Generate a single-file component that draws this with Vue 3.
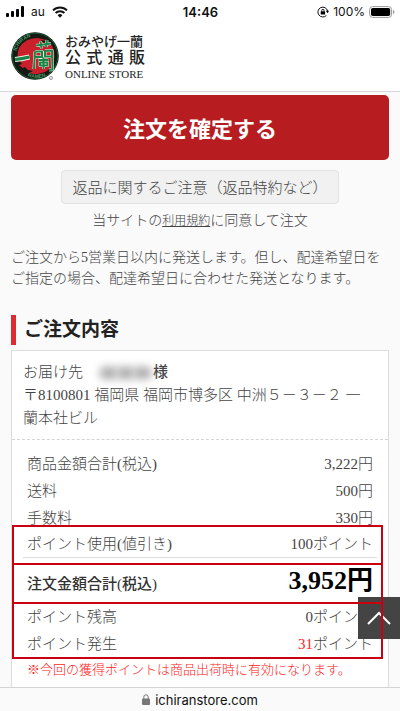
<template>
  <div class="screen">
    <!-- ステータスバー -->
    <div class="status-bar">
      <div class="status-side">
        <svg class="signal" viewBox="0 0 18 11" aria-hidden="true">
          <rect x="0" y="7" width="3" height="4" rx="1" />
          <rect x="5" y="5" width="3" height="6" rx="1" />
          <rect x="10" y="3" width="3" height="8" rx="1" />
          <rect x="15" y="0" width="3" height="11" rx="1" />
        </svg>
        <span>au</span>
        <svg class="wifi" viewBox="0 0 16 12" aria-hidden="true">
          <path d="M1 4.4a10 10 0 0 1 14 0" />
          <path d="M3.6 7a6.3 6.3 0 0 1 8.8 0" />
          <path class="wifi-dot" d="M8 11.8 5.6 9.3a3.4 3.4 0 0 1 4.8 0z" />
        </svg>
      </div>
      <strong class="clock">14:46</strong>
      <div class="status-side status-right">
        <svg class="rotation" viewBox="0 0 12 12" aria-hidden="true">
          <path class="ring" d="M10.6 5A4.9 4.9 0 1 0 9.4 9.4" />
          <path d="M8.8 4.8h3.2l-1.4 2.4z" />
          <rect x="3.7" y="5.2" width="4.4" height="3.4" rx=".5" />
          <path class="ring" d="M4.7 5.4V4.5a1.2 1.2 0 0 1 2.4 0v.9" />
        </svg>
        <span>100%</span>
        <svg class="battery" viewBox="0 0 26 12" aria-hidden="true">
          <rect class="battery-frame" x=".6" y=".6" width="22" height="10.8" rx="3" />
          <rect x="2" y="2" width="19.2" height="8" rx="1.8" />
          <path class="battery-tip" d="M24 4v4q1.5-.6 1.5-2T24 4z" />
        </svg>
      </div>
    </div>

    <!-- ヘッダー -->
    <header class="site-header">
      <a class="brand" href="#">
        <svg class="emblem" viewBox="0 0 50 50" aria-hidden="true">
          <defs>
            <path id="arc-top" d="M5.500 20A19.500 19.500 0 0 1 34 8" />
            <path id="arc-bottom" d="M14 43.500a22 22 0 0 0 25-1" />
          </defs>
          <circle cx="24" cy="25" r="23.800" fill="#141a14" />
          <circle cx="24" cy="25" r="22.800" fill="none" stroke="#1e6b3c" stroke-width=".8" />
          <path d="M8 17Q14 7 26 7q14 1 17 13 2 13-7 20-9 5-18 2l3-2-7-1-6-5 3-1Q4 26 8 17z" fill="#c9202b" />
          <path d="m9 38 5-2 3 3 5 1-4 2-6-1zM30 9l6 1-3 2z" fill="#141a14" />
          <text class="ring-text"><textPath href="#arc-top">ICHIRAN</textPath></text>
          <text class="ring-text"><textPath href="#arc-bottom" startOffset="3">RAMEN</textPath></text>
          <g class="mark-outline">
            <path class="mark-bar" d="M4 28.500Q10 28 18.500 26" />
            <path d="M25 14.500 40 12.500M29.500 10.500l1 7M36 9l-1 7" />
            <path d="M24 20.500 23 38M24 20.500h7v5.500h-7M34 20l7-.5.500 19-3.500.5M34 20v5.500h7M27.500 29h10M32.500 26.500V38M29 31.500h7.500v3H29z" />
          </g>
          <g class="mark">
            <path class="mark-bar" d="M4 28.500Q10 28 18.500 26" />
            <path d="M25 14.500 40 12.500M29.500 10.500l1 7M36 9l-1 7" />
            <path d="M24 20.500 23 38M24 20.500h7v5.500h-7M34 20l7-.5.500 19-3.500.5M34 20v5.500h7M27.500 29h10M32.500 26.500V38M29 31.500h7.500v3H29z" />
          </g>
          <circle cx="40" cy="47" r="1.500" fill="none" stroke="#666" stroke-width=".7" />
        </svg>
        <span class="brand-text">
          <span class="brand-sub">おみやげ一蘭</span>
          <span class="brand-main">公式通販</span>
          <span class="brand-en">ONLINE STORE</span>
        </span>
      </a>
    </header>

    <main class="content">
      <button class="btn-order" type="button">注文を確定する</button>
      <button class="btn-notice" type="button">返品に関するご注意（返品特約など）</button>
      <p class="agree">当サイトの<a href="#">利用規約</a>に同意して注文</p>
      <p class="shipping-note">
        ご注文から5営業日以内に発送します。但し、配達希望日を<br />ご指定の場合、配達希望日に合わせた発送となります。
      </p>

      <h2 class="section-title">ご注文内容</h2>

      <section class="order-card">
        <!-- お届け先 -->
        <div class="address">
          <div class="recipient">
            <span>お届け先</span>
            <span class="masked-name" aria-hidden="true"><i></i><i></i><i></i></span>
            <b>様</b>
          </div>
          <div>〒8100801 福岡県 福岡市博多区 中洲５－３－２ 一<br />蘭本社ビル</div>
        </div>

        <!-- 金額 -->
        <dl class="amounts">
          <div v-for="item in amounts" :key="item.label" class="row">
            <dt>{{ item.label }}</dt>
            <dd>{{ item.value }}</dd>
          </div>
        </dl>
        <dl class="frame frame-used">
          <div class="row">
            <dt>ポイント使用(値引き)</dt>
            <dd>100ポイント</dd>
          </div>
        </dl>
        <dl class="frame frame-total">
          <div class="row">
            <dt>注文金額合計(税込)</dt>
            <dd>3,952円</dd>
          </div>
        </dl>
        <dl class="frame frame-points">
          <div class="row">
            <dt>ポイント残高</dt>
            <dd>0ポイント</dd>
          </div>
          <div class="row">
            <dt>ポイント発生</dt>
            <dd><span class="earned">31</span>ポイント</dd>
          </div>
        </dl>
        <p class="point-note">※今回の獲得ポイントは商品出荷時に有効になります。</p>
      </section>
    </main>

    <!-- ページ上部へ -->
    <button class="to-top" type="button" aria-label="ページ上部へ" @click="scrollToTop">
      <svg viewBox="0 0 26 16" aria-hidden="true"><path d="M2 14 13 3l11 11" /></svg>
    </button>

    <!-- アドレスバー -->
    <footer class="address-bar">
      <svg viewBox="0 0 8 11" aria-hidden="true">
        <rect x="0" y="4.500" width="8" height="6.500" rx="1" />
        <path d="M1.800 5V3a2.200 2.200 0 0 1 4.400 0v2" />
      </svg>
      <span>ichiranstore.com</span>
    </footer>
  </div>
</template>

<script setup>
const amounts = [
  { label: '商品金額合計(税込)', value: '3,222円' },
  { label: '送料', value: '500円' },
  { label: '手数料', value: '330円' }
]

function scrollToTop() {
  document.querySelector('.content').scrollTo({ top: 0, behavior: 'smooth' })
}
</script>

<style>
body {
  margin: 0;
}
</style>

<style scoped>
.screen {
  position: relative;
  display: flex;
  flex-direction: column;
  height: 100vh;
  background: #fafafa;
  color: #444;
  font-family: "Liberation Serif", "Noto Sans CJK JP", serif;
  font-size: 15px;
  font-weight: 300;
}

p,
dl,
dd,
h2 {
  margin: 0;
}

button {
  font-family: inherit;
  cursor: pointer;
}

.status-bar {
  display: flex;
  align-items: center;
  flex-shrink: 0;
  height: 23px;
  padding: 0 5px 0 6px;
  background: #fff;
  color: #111;
  font-family: Inter, sans-serif;
  font-size: 12px;
  font-weight: 400;
}

.status-side {
  display: flex;
  flex: 1;
  align-items: center;
  gap: 7px;
}

.status-right {
  justify-content: flex-end;
  gap: 4px;
}

.clock {
  font-size: 13px;
  font-weight: 600;
}

.signal {
  width: 18px;
  height: 11px;
}

.wifi {
  width: 16px;
  height: 12px;
  fill: none;
  stroke: #111;
  stroke-width: 2;
}

.wifi-dot {
  fill: #111;
  stroke: none;
}

.rotation {
  width: 12px;
  height: 12px;
}

.ring {
  fill: none;
  stroke: #111;
  stroke-width: 1;
}

.battery {
  width: 26px;
  height: 12px;
}

.battery-frame {
  fill: none;
  stroke: #999;
}

.battery-tip {
  fill: #999;
}

.site-header {
  flex-shrink: 0;
  padding: 7px 11px 9px;
  border-bottom: 1px solid #d8d8da;
  background: #fff;
}

.brand {
  display: flex;
  align-items: center;
  gap: 4px;
  color: #222;
  text-decoration: none;
}

.emblem {
  width: 50px;
  height: 50px;
}

.ring-text {
  fill: #4c9a68;
  font-family: "Liberation Sans", sans-serif;
  font-size: 5px;
  font-weight: 700;
}

.mark-outline,
.mark {
  fill: none;
  stroke: #f3f0e4;
  stroke-width: 3;
  stroke-linejoin: round;
}

.mark {
  stroke: #168548;
  stroke-width: 2;
}

.mark-outline .mark-bar {
  stroke-width: 5;
}

.mark .mark-bar {
  stroke-width: 3;
}

.brand-text {
  display: flex;
  flex-direction: column;
  width: 80px;
  padding-top: 4px;
  font-weight: 500;
  line-height: 16px;
}

.brand-sub {
  font-size: 13px;
}

.brand-main {
  font-size: 16px;
  text-align: justify;
  text-align-last: justify;
}

.brand-en {
  font-size: 11px;
  white-space: nowrap;
}

.content {
  display: flex;
  flex: 1;
  flex-direction: column;
  min-height: 0;
  padding: 3px 11px 0;
  overflow: hidden;
}

.btn-order {
  flex-shrink: 0;
  height: 65px;
  padding: 0 0 2px;
  border: none;
  border-radius: 5px;
  background: #b71c21;
  color: #fff;
  font-size: 22px;
  font-weight: 700;
}

.btn-notice {
  flex-shrink: 0;
  align-self: center;
  height: 34px;
  margin-top: 10px;
  padding: 0 10px 2px;
  border: 1px solid #e2e2e2;
  border-radius: 4px;
  background: #f1f1f1;
  color: #444;
  font-size: 15px;
  font-weight: 300;
}

.agree {
  margin-top: 7px;
  font-size: 14px;
  line-height: 20px;
  text-align: center;
}

.agree a {
  color: #444;
  font-size: 12px;
}

.shipping-note {
  margin-top: 16px;
  font-size: 14px;
  line-height: 21px;
  white-space: nowrap;
}

.section-title {
  margin-top: 26px;
  padding-left: 8px;
  border-left: 5px solid #dc2e32;
  color: #222;
  font-size: 19px;
  font-weight: 700;
  line-height: 30px;
}

.order-card {
  flex: 1 0 auto;
  margin-top: 5px;
  border: 1px solid #dcdcdc;
  border-bottom: none;
  background: #fff;
}

.address {
  padding: 10px 11px 9px;
  border-bottom: 1px dashed #d4d4d4;
  line-height: 23px;
}

.recipient {
  display: flex;
}

.masked-name {
  display: flex;
  align-items: center;
  justify-content: center;
  width: 56px;
  margin-left: 14px;
}

.masked-name i {
  width: 17px;
  height: 12px;
  border-radius: 4px;
  background: #aaa;
  filter: blur(4px);
}

.recipient b {
  color: #444;
  font-weight: 500;
}

.row {
  display: flex;
  align-items: center;
  justify-content: space-between;
  padding: 0 15px;
  line-height: 27px;
}

.amounts {
  padding-top: 11px;
}

.frame {
  position: relative;
  margin-right: 5px;
}

.frame .row {
  padding-right: 10px;
}

/* 赤枠はボタンよりも手前に出す */
.frame::after {
  position: absolute;
  z-index: 3;
  inset: -2px 0 0;
  border: 2px solid #c8000f;
  content: "";
  pointer-events: none;
}

.frame-used::after {
  inset: -7px 0 0;
}

.frame-used {
  padding-bottom: 7px;
}

.frame-used .row {
  margin: 0 6px 0 11px;
  padding: 0 4px;
  border-bottom: 1px solid #ddd;
  line-height: 25px;
}

.frame-total {
  padding-bottom: 4px;
  color: #333;
}

.frame-total .row {
  align-items: baseline;
  line-height: 32px;
}

.frame-total dt {
  font-weight: 500;
}

.frame-total dd {
  color: #000;
  font-size: 26px;
  font-weight: 700;
}

.frame-points {
  padding-bottom: 1px;
}

.earned,
.point-note {
  color: #f22;
}

.point-note {
  padding: 0 15px;
  font-size: 13px;
  line-height: 22px;
}

.to-top {
  position: absolute;
  z-index: 2;
  right: 0;
  bottom: 72px;
  display: flex;
  align-items: center;
  justify-content: center;
  width: 42px;
  height: 42px;
  padding: 0;
  border: none;
  background: #444;
}

.to-top svg {
  width: 26px;
  height: 16px;
  fill: none;
  stroke: #fff;
  stroke-width: 2;
}

.address-bar {
  display: flex;
  align-items: center;
  justify-content: center;
  flex-shrink: 0;
  gap: 5px;
  height: 23px;
  border-top: 1px solid #d4d4d4;
  background: #fafafa;
  color: #111;
  font-family: Inter, sans-serif;
  font-size: 13px;
  font-weight: 400;
}

.address-bar svg {
  width: 8px;
  height: 11px;
  fill: #777;
}

.address-bar path {
  fill: none;
  stroke: #777;
  stroke-width: 1;
}
</style>
